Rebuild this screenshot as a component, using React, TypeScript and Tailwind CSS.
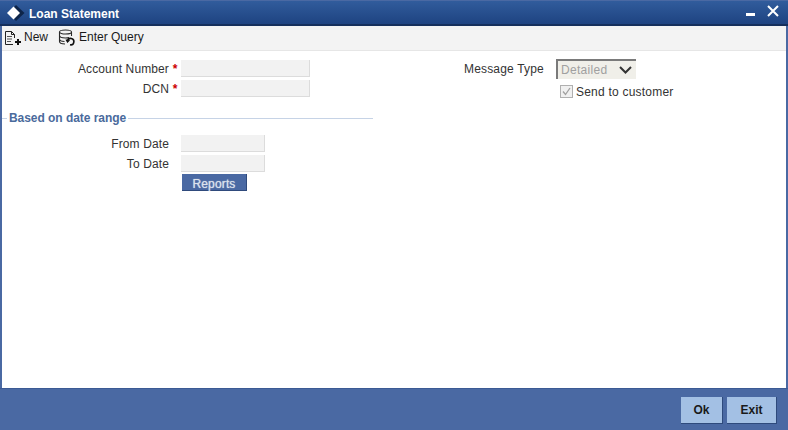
import React from "react";

const Diamond = () => (
  <svg width="22" height="20" viewBox="0 0 22 20" className="shrink-0">
    <path d="M9 2 L17.500 10 L9 18 L2 10 Z" fill="#0e2549" />
    <path d="M6.500 3.500 L13 10 L6.500 16.500 L0 10 Z" fill="#ffffff" />
  </svg>
);

const NewIcon = () => (
  <svg width="18" height="16" viewBox="0 0 18 16" fill="none" stroke="#222" strokeWidth="1" className="shrink-0">
    <path d="M1.500 14.500 V1.500 H7.500 L10.500 4.500 V8" />
    <path d="M7.500 1.500 V4.500 H10.500" />
    <path d="M3 6.500 H8 M3 9 H8 M3 11.500 H7" stroke="#555" />
    <path d="M1.500 14.500 H9" />
    <path d="M14 9 V15 M11 12 H17" strokeWidth="2" stroke="#111" />
  </svg>
);

const QueryIcon = () => (
  <svg width="17" height="17" viewBox="0 0 17 17" fill="none" stroke="#2a2a2a" strokeWidth="1.100" className="shrink-0">
    <ellipse cx="7.500" cy="3" rx="6" ry="2" />
    <path d="M1.500 3 V12.500 C1.500 14 4 15 7 15" />
    <path d="M13.500 3 V7" />
    <path d="M1.500 6.500 C1.500 8 4 9 7.500 9 C9 9 10 8.800 11 8.500" />
    <path d="M1.500 10 C1.500 11.500 4 12.500 6.500 12.500" />
    <path d="M9.500 12 A3.200 3.200 0 1 1 12 15.800" strokeWidth="1.600" stroke="#111" />
    <path d="M8 10.500 L9.500 13 L11.500 11" strokeWidth="1.200" stroke="#111" />
  </svg>
);

const inputCls = "h-[17px] bg-[#f2f2f2] border-r border-b border-[#dcdcdc] shrink-0";
const labelCls = "text-[#333333] text-right tracking-[0.12px]";

export default function App() {
  return (
    <div
      className="w-[788px] h-[430px] flex flex-col overflow-hidden bg-[#4a69a3] text-[12px] leading-[14px] text-[#333333]"
      style={{ fontFamily: '"Liberation Sans", Arial, sans-serif' }}
    >
      {/* Title bar */}
      <div className="h-[26px] shrink-0 flex items-center pl-[7px] pr-[9px] bg-gradient-to-b from-[#315c9c] to-[#1e4381] border-b-2 border-[#152f5c] border-t border-t-[#4a69a3]">
        <Diamond />
        <span className="mt-[2px] text-white font-bold text-[12px]">Loan Statement</span>
        <div className="ml-auto flex items-center gap-[12px]">
          <div className="w-[9px] h-[3px] bg-white mt-[3px]" />
          <svg width="12" height="12" viewBox="0 0 12 12" className="-mt-[4px]">
            <path d="M1 1 L11 11 M11 1 L1 11" stroke="#fff" strokeWidth="2" />
          </svg>
        </div>
      </div>

      {/* Main panel */}
      <div className="flex-1 min-h-0 flex flex-col mx-[2px] bg-white">
        {/* Toolbar */}
        <div className="h-[25px] shrink-0 flex items-center pl-[2px] bg-[#f3f3f3] border-b border-[#e6e6e6]">
          <NewIcon />
          <span className="ml-[2px] -mt-[3px] text-[#1a1a1a]">New</span>
          <span className="ml-[10px] -mt-[1px]"><QueryIcon /></span>
          <span className="ml-[4px] -mt-[3px] text-[#1a1a1a]">Enter Query</span>
        </div>

        {/* Body */}
        <div className="flex-1 min-h-0 flex">
          {/* Left column */}
          <div className="w-[371px] shrink-0 pt-[9px] flex flex-col">
            <div className="flex items-center h-[17px]">
              <span className={`${labelCls} w-[167px]`}>Account Number</span>
              <span className="w-[12px] text-center text-[#cc0000] font-bold">*</span>
              <div className={`${inputCls} w-[129px]`} />
            </div>
            <div className="flex items-center h-[17px] mt-[3px]">
              <span className={`${labelCls} w-[167px]`}>DCN</span>
              <span className="w-[12px] text-center text-[#cc0000] font-bold">*</span>
              <div className={`${inputCls} w-[129px]`} />
            </div>

            <div className="flex items-center mt-[13px] h-[16px]">
              <div className="w-[5px] h-px bg-[#c6d3e6]" />
              <span className="mx-[2px] font-bold text-[#4a6a9c] tracking-[-0.05px]">Based on date range</span>
              <div className="flex-1 h-px bg-[#c6d3e6]" />
            </div>

            <div className="flex items-center h-[17px] mt-[9px]">
              <span className={`${labelCls} w-[167px]`}>From Date</span>
              <div className={`${inputCls} w-[84px] ml-[12px]`} />
            </div>
            <div className="flex items-center h-[17px] mt-[3px]">
              <span className={`${labelCls} w-[167px]`}>To Date</span>
              <div className={`${inputCls} w-[84px] ml-[12px]`} />
            </div>
            <div className="ml-[180px] mt-[2px] w-[65px] h-[17px] pt-[3px] bg-[#4a69a3] border-r border-b border-[#2f4a7c] flex items-center justify-center text-[#dde2ec] tracking-[0.15px] [text-shadow:0_0_1px_#c8d2e4]">
              Reports
            </div>
          </div>

          {/* Right column */}
          <div className="flex-1 pl-[91px] pt-[8px] flex flex-col">
            <div className="flex items-center h-[20px]">
              <span className="w-[92px] text-[#333333] tracking-[0.17px]">Message Type</span>
              <div className="w-[80px] h-[20px] flex items-center justify-between pl-[3px] pr-[2px] bg-[#f0efe9] border-l-2 border-t-2 border-[#7a7a7a] text-[#a0a0a0]">
                <span className="tracking-[0.3px]">Detailed</span>
                <svg width="13" height="8" viewBox="0 0 13 8" fill="none" className="mr-[2px]">
                  <path d="M1 1 L6.500 6.500 L12 1" stroke="#333" strokeWidth="2" />
                </svg>
              </div>
            </div>
            <div className="flex items-center h-[13px] mt-[6px] ml-[96px]">
              <div className="w-[13px] h-[13px] bg-[#f0f0f0] border border-[#b0b0b0] flex items-center justify-center shrink-0">
                <svg width="11" height="11" viewBox="0 0 11 11" fill="none">
                  <path d="M2 5.500 L4.500 8.500 L9 2" stroke="#a0a0a0" strokeWidth="1.300" />
                </svg>
              </div>
              <span className="ml-[3px] tracking-[0.22px] whitespace-nowrap">Send to customer</span>
            </div>
          </div>
        </div>
      </div>

      {/* Footer */}
      <div className="h-[42px] shrink-0 flex items-center justify-end gap-[4px] pr-[11px] pt-[1px] bg-[#4a69a3] border-t border-[#3c5a94]">
        <div className="w-[42px] h-[27px] flex items-center justify-center bg-[#a3c0e4] border-r border-b border-[#2e4a7c] text-[#1a1a1a] font-bold text-[12px]">Ok</div>
        <div className="w-[50px] h-[27px] flex items-center justify-center bg-[#a3c0e4] border-r border-b border-[#2e4a7c] text-[#1a1a1a] font-bold text-[12px]">Exit</div>
      </div>
    </div>
  );
}
